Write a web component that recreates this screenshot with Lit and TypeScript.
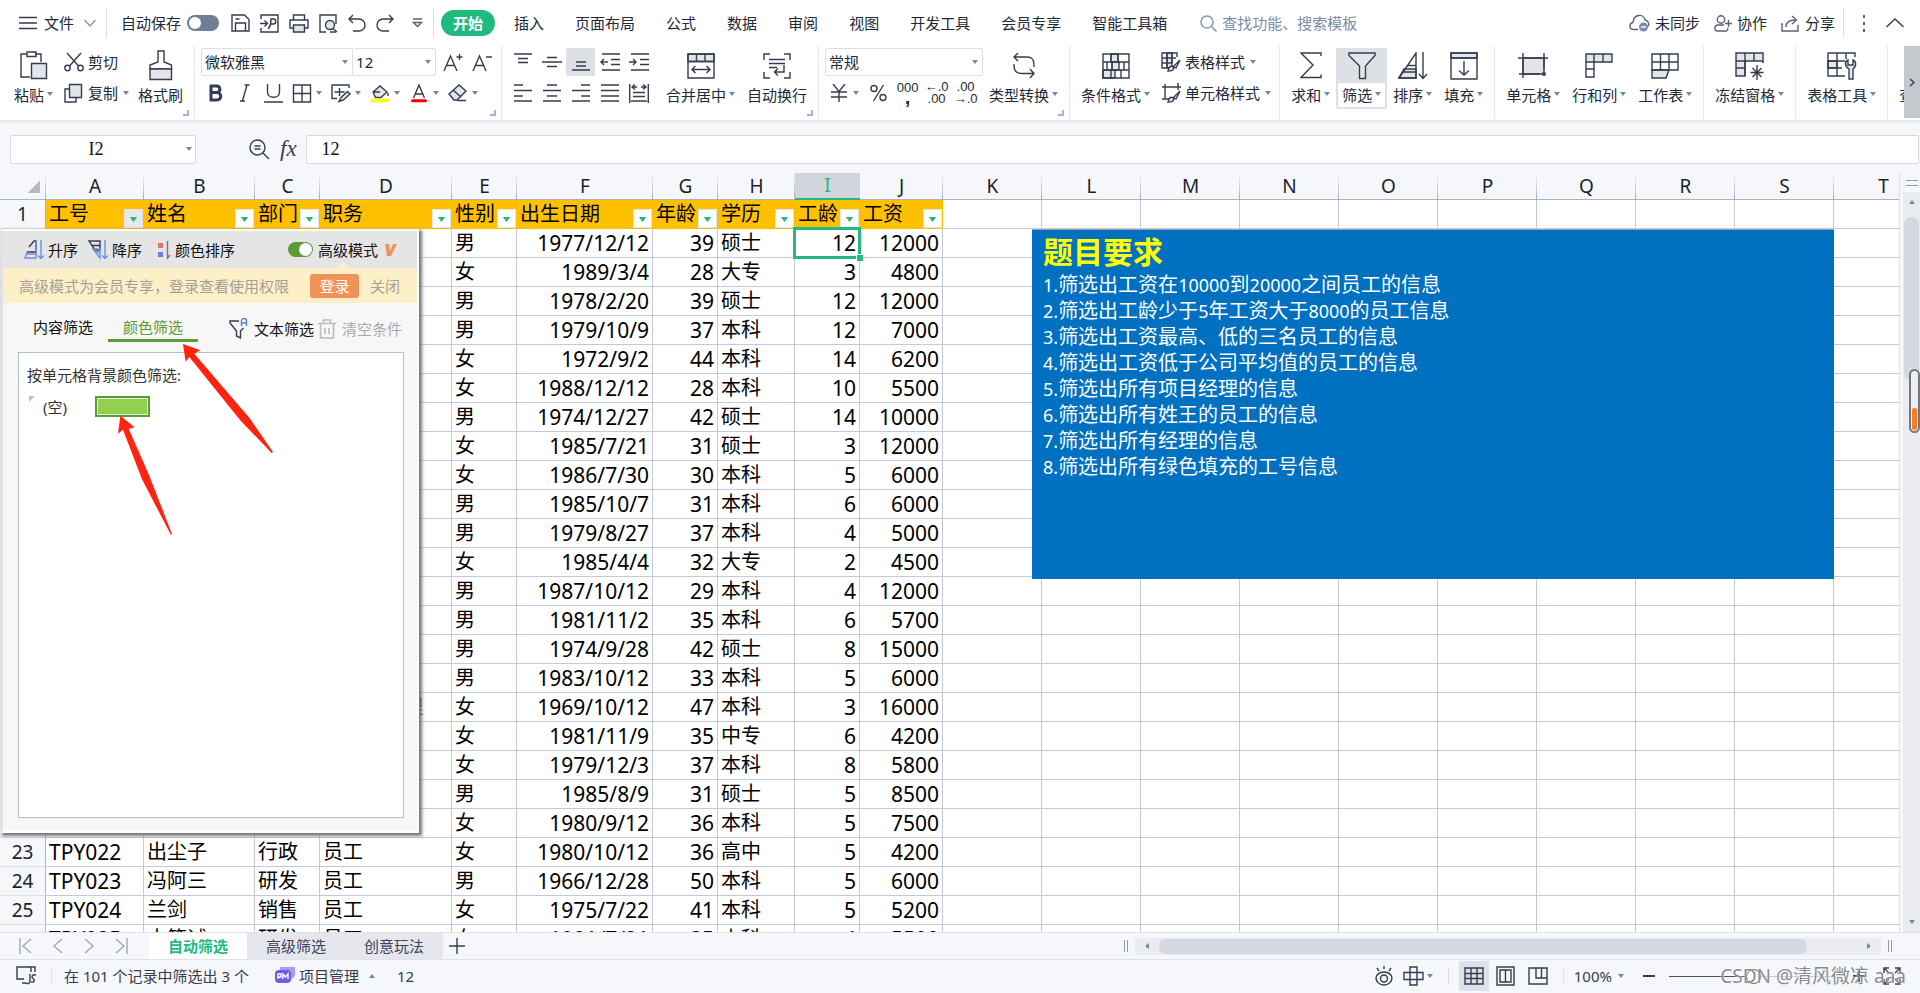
import { LitElement, html, svg, css, nothing, TemplateResult } from "lit";
import { customElement } from "lit/decorators.js";
import { classMap } from "lit/directives/class-map.js";
import { styleMap } from "lit/directives/style-map.js";

const icon = (w: number, h: number, body: unknown) => html`<svg
  class="ico" width=${w} height=${h} viewBox="0 0 ${w} ${h}" aria-hidden="true">${body}</svg>`;

const caret = html`<svg class="caret" width="6" height="4" viewBox="0 0 6 4" aria-hidden="true"><path d="M0 0h6L3 4z"/></svg>`;

const I: Record<string, TemplateResult> = {
  menu: icon(18, 14, svg`<path d="M0 1.500h18M0 7h18M0 12.500h18"/>`),
  chevronDown: icon(12, 8, svg`<path class="soft" d="M.5 1l5.500 6 5.500-6"/>`),
  chevronUp: icon(18, 10, svg`<path d="M.5 9L9 1l8.500 8"/>`),
  save: icon(19, 18, svg`<path d="M1 1h12.500l4.500 4.500v11.500h-17zM4.500 17V9h10v8M4.500 5h4"/>`),
  exportDoc: icon(19, 19, svg`<path d="M1 5V1h17v17H1v-4M0 9.500h7M4.500 6.500l3 3-3 3M8.500 15c2-3 2.500-6 2.500-10h2.500c3 0 3 5 0 5h-2.500"/>`),
  print: icon(20, 19, svg`<path d="M4.500 5.500V1h11v4.500M4.500 14H1V6h18v8h-3.500"/><path class="g" d="M4.500 11h11v7h-11z"/>`),
  preview: icon(19, 19, svg`<path d="M7 18H1V1h16v9M17 18h-6"/><circle class="g" cx="11" cy="11" r="4.500"/><path d="M14 14.500l4 3.500"/>`),
  undo: icon(18, 18, svg`<path d="M5 1L1 5l4 4M1 5h10a6 6 0 010 12H5"/>`),
  redo: icon(18, 18, svg`<path d="M13 1l4 4-4 4M17 5H7a6 6 0 000 12h6"/>`),
  more: icon(11, 10, svg`<path class="mid" d="M1 1h9M1.500 4.500l4 4 4-4z"/>`),
  search: icon(17, 17, svg`<path class="blue" d="M12 12l4.500 4.500"/><circle class="blue" cx="7" cy="7" r="6"/>`),
  cloud: icon(21, 18, svg`<path class="mid" d="M9 15.500H4.500C-.5 15 .2 9 4 8.500 4.500 0 14.500-1 16 6c3.500.5 4.500 4 3 6.500"/><circle cx="14.500" cy="13" r="4.500" style="fill:#7d8bab;stroke:none"/><path d="M12 13h5" style="stroke:#fff"/>`),
  collab: icon(18, 17, svg`<circle class="mid" cx="7" cy="4.500" r="3.700"/><path class="mid" d="M10 10H4c-4 0-4 6-1 6h9c2 0 2-2 1.500-3M14.500 5v7M11 8.500h7"/>`),
  share: icon(19, 17, svg`<path class="mid" d="M2 9H1v7h16v-6M5 12c0-5 4-7 9-7M11 1l4.500 4L11 9"/>`),
  dots: icon(4, 17, svg`<path d="M1 0h2v3H1zM1 7h2v3H1zM1 14h2v3H1z" style="fill:#5b6275;stroke:none"/>`),
  paste: icon(28, 30, svg`<path d="M10 26H1V3h6M15 3h6v8M7 1h9v4.500H7z"/><path class="g" d="M11.500 12.500h15v15h-15z"/>`),
  cut: icon(20, 20, svg`<circle cx="3.500" cy="16" r="2.700"/><circle cx="16.500" cy="16" r="2.700"/><path d="M3 1l11.500 13M17 1L5.500 14"/>`),
  copy: icon(20, 20, svg`<path d="M5 6H1v13h11v-4"/><path class="g" d="M5.500 1.500h12v13h-12z"/>`),
  brush: icon(24, 31, svg`<path d="M1 19v-4l8-3V1h6v11l7.500 3v4z"/><path class="g" d="M1 19h21.500v10.500H1z"/>`),
  fontUp: icon(20, 19, svg`<path d="M1 18L7.500 3 14 18M3.500 12.500h8M13.500 4h6M16.500 1v6"/>`),
  fontDown: icon(20, 19, svg`<path d="M1 18L7.500 3 14 18M3.500 12.500h8M14 4h6"/>`),
  bold: icon(14, 18, svg`<path d="M2 2h5.500c4.500 0 4.500 6.500 0 6.500H2h6c5 0 5 7.500 0 7.500H2z" style="stroke-width:3"/>`),
  italic: icon(12, 18, svg`<path d="M5.500 1h5M1 17h5M8 1L3.500 17"/>`),
  underline: icon(19, 19, svg`<path d="M3.500 0v8c0 7 12 7 12 0V0M0 18h19"/>`),
  borders: icon(19, 19, svg`<path d="M1 1h17v17H1zM9.500 1v17M1 9.500h17"/>`),
  drawBorder: icon(20, 19, svg`<path d="M6 14.500H1V1h17v3M3.500 8h10M8.500 4v8"/><path class="g" d="M8 17.500l2-4 6.500-6 2.500 2.500-6.500 6z"/>`),
  fill: icon(20, 19, svg`<path class="g" d="M3 8l7-6 7 6-6 5.500H5.500zM3 8h7"/><path d="M18 9v3"/><path d="M2.500 16.500h15" style="stroke:#ff0;stroke-width:3.500;stroke-linecap:round"/>`),
  fontColor: icon(18, 19, svg`<path d="M3.500 14L9 1l5.500 13M5.500 10h7"/><path d="M2.500 16.800h13" style="stroke:#f00;stroke-width:3;stroke-linecap:round"/>`),
  eraser: icon(20, 18, svg`<path class="g" d="M1 10L11 1l7 6-9 9H6z"/><path d="M9 16.500h9M5 6l8 7"/>`),
  vTop: icon(20, 18, svg`<path d="M1 1h18M5 5.500h10M5 9.500h10"/>`),
  vMid: icon(20, 18, svg`<path d="M5 4.500h10M0 9h20M5 13.500h10"/>`),
  vBottom: icon(20, 18, svg`<path d="M5 9h10M5 13h10M1 17h18"/>`),
  outdent: icon(20, 18, svg`<path d="M2 1h18M11 6.500h9M11 11.500h9M2 17h18M8 9H1M4 6L1 9l3 3"/>`),
  indent: icon(20, 18, svg`<path d="M2 1h18M11 6.500h9M11 11.500h9M2 17h18M0 9h7M4 6l3 3-3 3"/>`),
  left: icon(20, 18, svg`<path d="M1 1h9M1 6.500h18M1 12h9M1 17h18"/>`),
  center: icon(20, 18, svg`<path d="M5 1h10M1 6.500h18M5 12h10M1 17h18"/>`),
  right: icon(20, 18, svg`<path d="M10 1h9M1 6.500h18M10 12h9M1 17h18"/>`),
  justify: icon(20, 18, svg`<path d="M1 1h18M1 6.500h18M1 12h18M1 17h18"/>`),
  distribute: icon(20, 19, svg`<path d="M.7 0v19M19.300 0v19M3 3h5M12 3h5M6 .5L3 3l3 2.500M14 .5L17 3l-3 2.500M4 8.500h12M4 12.500h12M2 17h16"/>`),
  merge: icon(28, 26, svg`<path class="g" d="M1 1h26v7.500H1z"/><path d="M1 1h26v24H1zM1 8.500h26M9.500 1v7M18 1v7M5 16.500h18M8.500 13L5 16.500 8.500 20M19.500 13l3.500 3.500-3.500 3.500"/>`),
  wrap: icon(28, 26, svg`<path d="M1 7V1h6M21 1h6v6M1 19v6h6M21 25h6v-6M6 6.500h16M6 10.500h16M6 14.500h8M21 12v7h-9M15 15.500L11.500 19l3.500 3.500"/>`),
  yen: icon(18, 18, svg`<path d="M3 0l6 7.500L15 0M9 7.500V18M1 8h16M1 13h16"/>`),
  percent: icon(17, 18, svg`<circle cx="4" cy="4.500" r="3"/><circle cx="13" cy="13.500" r="3"/><path d="M13.500 1L3.500 17"/>`),
  convert: icon(24, 27, svg`<path d="M6 1L2 5l4 4M2 5h13c5 0 7 2 7 8v2M18 17l4 4.500-4 4.500M22 21.500H10c-5 0-8-2-8-8V12"/>`),
  condFormat: icon(28, 26, svg`<path class="g" d="M9 1h7v8H9zM10 9h7v8h-7zM1 17h12v8H1z"/><path d="M1 1h26v24H1zM1 9h26M1 17h26M9 1v8M16 1v8M5 9v8M10 9v8M22 9v8M9 17v8M19 17v8"/>`),
  tableStyle: icon(20, 20, svg`<path class="g" d="M6 1h5v15H6z"/><path d="M6 16H1V1h15v4M1 6h14M1 11h10M6 1v15M11 1v10"/><path d="M19 8l-6.500 6.500M19 8l-4 8-3-2"/><path class="g" d="M7 19c1-5 3-6 6-3-1 3-3 3-6 3z"/>`),
  cellStyle: icon(20, 20, svg`<path d="M4 1v15M17 0v7M1 4h19M1 16h8"/><path d="M19 8l-6.500 6.500M19 8l-4 8-3-2"/><path class="g" d="M7 19c1-5 3-6 6-3-1 3-3 3-6 3z"/>`),
  sum: icon(22, 27, svg`<path d="M21 4V1H1l12 12L1 25.500h20v-3"/>`),
  funnel: icon(28, 28, svg`<path class="g" d="M1 1h26v2.500L17.500 14v12.500h-6V14L1 3.500z"/>`),
  sort: icon(30, 28, svg`<path class="g" d="M6 17h12v9H1z"/><path d="M1 26L18 1v25zM9 13.500h9M5 20h13M25 0v26M21 22l4 4.500 4-4.500"/>`),
  fillDown: icon(28, 28, svg`<path class="g" d="M1 1h26v5H1z"/><path d="M1 1h26v26H1zM1 6h26M14 9v14M9 18.500l5 4.500 5-4.500"/>`),
  cell: icon(30, 26, svg`<path class="g" d="M5 5h21v16H5z"/><path d="M0 5h30M5 0v25M26 0v16M1 21h21"/><path d="M25 20h2v2h-2z"/>`),
  rowCol: icon(28, 26, svg`<path class="g" d="M1 1h26v8H1z"/><path d="M1 9v15h8V1M18 1v8M1 16h8"/>`),
  worksheet: icon(28, 26, svg`<path class="g" d="M1 17h17l-3 8H1z"/><path d="M1 1h26v16H1zM1 9h26M9.500 1v16M18 1v16"/>`),
  freeze: icon(30, 28, svg`<path class="g" d="M1 1h27v8H10v15H1z"/><path d="M10 1v23M19 1v8M28 9v2M1 9h9M1 16h9M22 13v15M15.500 20.500h13M17.500 16l9 9M26.500 16l-9 9"/>`),
  tableTool: icon(30, 28, svg`<path class="g" d="M1 9h9v7H1z"/><path d="M18 24H1V1h27v4M1 9h17M1 16h14M10 1v23M19 1v6"/><path class="g" d="M22 27V17c-5-3-4-8-1-9v5h5V8c3 1 4 6 0 9v10z"/>`),
  zoomOut: icon(21, 21, svg`<circle cx="8.500" cy="8.500" r="7.500"/><path d="M14 14l6 6M5.500 7h6M5.500 10h6"/>`),
  sortAsc: icon(20, 20, svg`<path d="M5 7l5-6h2v11H3"/><path class="vio" d="M3 12l-2 6h11V1M3 14h9M17 0v18M14 15.500l3 3 3-3"/>`),
  sortDesc: icon(20, 20, svg`<path d="M1 1h11v9H7zM4 5.500h8"/><path class="vio" d="M5 9h7v9zM7 12h5M17 0v18M14 15.500l3 3 3-3"/>`),
  sortColor: icon(14, 20, svg`<path d="M1 3h5v5H1z" style="fill:#e8706e;stroke:none"/><path d="M1 12h5v5H1z" style="fill:#6b7ff0;stroke:none"/><path d="M10.500 1v17l2.500-3" style="stroke:#777"/>`),
  textFilter: icon(20, 21, svg`<path d="M10 3H1v2l6.500 8v5l4 2V13l3-3"/><path d="M12.500 8V3q0-2.500 2.500-2.500T17.500 3v5M12.500 5h5" style="stroke:#4d84dc"/>`),
  trash: icon(20, 20, svg`<path class="dim" d="M1 4.500h18M6.500 4V1h7v3M3.500 5v14h13V5M8 9v6M12 9v6"/>`),
  first: icon(13, 16, svg`<path class="nav" d="M1 0v16M12 1L4 8l8 7"/>`),
  prev: icon(13, 16, svg`<path class="nav" d="M11 1L3 8l8 7"/>`),
  next: icon(13, 16, svg`<path class="nav" d="M2 1l8 7-8 7"/>`),
  last: icon(13, 16, svg`<path class="nav" d="M12 0v16M1 1l8 7-8 7"/>`),
  plus: icon(16, 16, svg`<path d="M8 0v16M0 8h16"/>`),
  js: icon(21, 20, svg`<path d="M8 13H1V1h14v5M6 17h4M15 1h4v5M14 8v7c0 3-3 3-4 2M20 9c-4-1-5 2-3 3.500s2 4-2 3.500"/>`),
  pm: icon(20, 18, svg`<path d="M5 0h15v9l-5 5H5z" style="fill:#a79bf5;stroke:none"/><rect x="0" y="3" width="16" height="13" rx="4" style="fill:#6c5ce7;stroke:none"/><path d="M3 12V7h3v3H3M8 12V7l2.500 3L13 7v5" style="stroke:#fff"/>`),
  eye: icon(20, 20, svg`<path d="M10 6c5 0 8 3 8 6s-3 7-8 7-8-4-8-7 3-6 8-6zM10 0v3M3 2l2 3M17 2l-2 3"/><circle cx="10" cy="12.500" r="3.500"/>`),
  cross: icon(21, 20, svg`<path d="M7 1h7v18H7zM1 6.500h19v7H1z"/>`),
  viewGrid: icon(20, 18, svg`<path d="M1 1h18v16H1zM1 6.500h18M1 11.500h18M7 1v16M13 1v16"/>`),
  viewPage: icon(19, 20, svg`<path d="M1 1h17v18H1zM4 4h11v12H4zM9.500 4v12"/>`),
  viewBreak: icon(20, 18, svg`<path d="M1 1h18v16H1zM8 1v10h11M13.500 1v10"/>`),
  full: icon(18, 18, svg`<path d="M1 6V1h5M12 1h5v5M1 12v5h5M12 17h5v-5M2 2l4 4M16 2l-4 4M2 16l4-4M16 16l-4-4"/>`),
};

const COLS: [string, number][] = [
  ["A", 98], ["B", 111], ["C", 65], ["D", 132], ["E", 65], ["F", 136], ["G", 65], ["H", 77], ["I", 65], ["J", 83],
  ..."KLMNOPQRST".split("").map((c) => [c, 99] as [string, number]),
];
const HEAD = ["工号", "姓名", "部门", "职务", "性别", "出生日期", "年龄", "学历", "工龄", "工资"];
const ROWS: string[][] = `,,,,男,1977/12/12,39,硕士,12,12000
,,,,女,1989/3/4,28,大专,3,4800
,,,,男,1978/2/20,39,硕士,12,12000
,,,,男,1979/10/9,37,本科,12,7000
,,,,女,1972/9/2,44,本科,14,6200
,,,,女,1988/12/12,28,本科,10,5500
,,,,男,1974/12/27,42,硕士,14,10000
,,,,女,1985/7/21,31,硕士,3,12000
,,,,女,1986/7/30,30,本科,5,6000
,,,,男,1985/10/7,31,本科,6,6000
,,,,男,1979/8/27,37,本科,4,5000
,,,,女,1985/4/4,32,大专,2,4500
,,,,男,1987/10/12,29,本科,4,12000
,,,,男,1981/11/2,35,本科,6,5700
,,,,男,1974/9/28,42,硕士,8,15000
,,,,男,1983/10/12,33,本科,5,6000
,,,项目部经理,女,1969/10/12,47,本科,3,16000
,,,,女,1981/11/9,35,中专,6,4200
,,,,女,1979/12/3,37,本科,8,5800
,,,,男,1985/8/9,31,硕士,5,8500
,,,,女,1980/9/12,36,本科,5,7500
TPY022,出尘子,行政,员工,女,1980/10/12,36,高中,5,4200
TPY023,冯阿三,研发,员工,男,1966/12/28,50,本科,5,6000
TPY024,兰剑,销售,员工,女,1975/7/22,41,本科,5,5200
TPY025,古笃诚,研发,员工,女,1981/7/21,35,本科,4,5500`.split("\n").map((r) => r.split(","));

const NOTES = [
  "1.筛选出工资在10000到20000之间员工的信息",
  "2.筛选出工龄少于5年工资大于8000的员工信息",
  "3.筛选出工资最高、低的三名员工的信息",
  "4.筛选出工资低于公司平均值的员工的信息",
  "5.筛选出所有项目经理的信息",
  "6.筛选出所有姓王的员工的信息",
  "7.筛选出所有经理的信息",
  "8.筛选出所有绿色填充的工号信息",
];

const shared = css`
  * { box-sizing: border-box; }
  button, input, select { font: inherit; color: inherit; border: 0; background: none; padding: 0; margin: 0; border-radius: 0; outline: 0; }
  button { white-space: nowrap; display: flex; align-items: center; }
  .ico { display: block; flex: none; fill: none; stroke: #363c50; stroke-width: 1.4; }
  .ico .g { fill: #e3e5e9; }
  .ico .soft { stroke: #8d93a3; }
  .ico .mid { stroke: #5b6275; }
  .ico .blue { stroke: #8c98b4; stroke-width: 1.6; }
  .ico .vio { stroke: #6f8fe0; }
  .ico .dim { stroke: #bcbcbc; stroke-width: 1.6; }
  .ico .nav { stroke: #a3a8b5; }
  .caret { flex: none; fill: #7885a0; }
`;

@customElement("filter-panel")
export class FilterPanel extends LitElement {
  static styles = [shared, css`
    :host {
      display: flex; flex-direction: column; background: #f7f7f7; color: #111;
      border: 2px solid #fff; border-left-color: #dfe1e4; box-shadow: 2px 2px 3px 1px #777; line-height: 20px;
    }
    .head { flex: none; display: flex; align-items: center; height: 37px; background: #e5e5e5; padding: 0 20px 0 21px; }
    .head button { gap: 4px; margin-right: 10px; }
    .head .wide { margin-right: auto; margin-left: 5px; }
    .mode { display: flex; align-items: center; gap: 5px; margin-right: 7px; }
    .mode input { appearance: none; width: 25px; height: 15px; border-radius: 8px; background: #5d9a38; display: flex; justify-content: flex-end; padding: 1px; }
    .mode input::before { content: ""; width: 13px; height: 13px; border-radius: 50%; background: #fff; }
    .vip { fill: #f0935a; display: block; }
    .tip { flex: none; display: flex; align-items: center; justify-content: space-between; height: 35px; background: #fdf0c8; color: #a5a093; padding: 0 17px 0 16px; position: relative; white-space: nowrap; }
    .tip::before { content: ""; position: absolute; top: -6px; right: 69px; border: 5px solid transparent; border-top: 0; border-bottom: 6px solid #fdf0c8; }
    .tip .login { height: 24px; width: 49px; justify-content: center; border-radius: 3px; background: #f0935a; color: #fff; margin: 0 11px 0 auto; }
    .tabs { flex: none; display: flex; align-items: center; height: 49px; padding: 2px 15px 0 15px; }
    .tabs .tab { width: 90px; height: 26px; justify-content: center; border-bottom: 3px solid transparent; }
    .tabs .on { color: #5d9a38; border-color: #5d9a38; }
    .tabs .tool { gap: 5px; }
    .tabs .first { margin-left: auto; margin-right: 3px; }
    .tabs .off { color: #aaa; }
    .box { flex: 1; margin: 0 13px 13px 15px; border: 1px solid #b4bfcc; background: #fff; padding: 12px 8px; color: #333; }
    .opts { display: flex; align-items: center; margin-top: 11px; }
    .opts .mark { width: 0; height: 0; align-self: flex-start; border: 3px solid #c4c4c4; border-right-color: transparent; border-bottom-color: transparent; margin: 0 8px 0 2px; }
    .swatch { width: 55px; height: 21px; border: 2px solid #5d9a38; background: #92d050; box-shadow: inset 0 0 0 1px #e4f3d4; margin-left: 28px; }
  `];
  render() {
    return html`
      <div class="head">
        <button>${I.sortAsc}升序</button><button>${I.sortDesc}降序</button><button class="wide">${I.sortColor}颜色排序</button>
        <label class="mode"><input type="checkbox" checked />高级模式</label>
        <svg class="vip" width="12" height="12" viewBox="0 0 12 12"><path d="M0 0h4l1 7 3-7h4L6 12H2z"/></svg>
      </div>
      <div class="tip"><span>高级模式为会员专享，登录查看使用权限</span><button class="login">登录</button><button>关闭</button></div>
      <div class="tabs">
        <button class="tab">内容筛选</button><button class="tab on">颜色筛选</button>
        <button class="tool first">${I.textFilter}文本筛选</button><button class="tool off">${I.trash}清空条件</button>
      </div>
      <div class="box">
        <div>按单元格背景颜色筛选:</div>
        <div class="opts"><span class="mark"></span><span>(空)</span><button class="swatch" aria-label="绿色"></button></div>
      </div>`;
  }
}

@customElement("app-root")
export class AppRoot extends LitElement {
  static styles = [shared, css`
    :host {
      display: flex; flex-direction: column; height: 100vh; overflow: hidden; background: #f5f7fa; color: #22283a;
      font: 15px/20px "Noto Sans", "Noto Sans CJK SC", sans-serif;
    }
    .menu { flex: none; display: flex; align-items: center; height: 46px; background: #fff; padding: 0 16px 0 19px; }
    .vsep { flex: none; width: 1px; height: 30px; background: #dcdfe4; }
    .file { gap: 7px; margin-right: 10px; }
    .file .ico:last-child { margin-left: 3px; }
    .auto { display: flex; align-items: center; gap: 6px; margin: 0 12px 0 14px; white-space: nowrap; }
    .auto input { appearance: none; width: 32px; height: 16px; border-radius: 8px; background: #717c96; padding: 2px; display: flex; }
    .auto input::before { content: ""; width: 12px; height: 12px; border-radius: 50%; background: #fff; }
    .quick { display: flex; align-items: center; gap: 10px; margin-right: 10px; }
    .quick button:last-child { margin-left: 8px; }
    .tabs { display: flex; gap: 7px; margin-left: 7px; }
    .tabs button { height: 26px; padding: 0 12px; border-radius: 13px; }
    .tabs .on { background: #20ba7e; color: #fff; font-weight: 700; }
    .search { display: flex; align-items: center; gap: 5px; margin-left: 21px; margin-right: auto; }
    .search input { width: 160px; }
    .search input::placeholder { color: #7e8aa6; opacity: 1; }
    .acct { gap: 5px; margin-right: 14px; }
    .acct.end { margin-right: 8px; }
    .dots { margin: 0 20px 0 18px; }

    .ribbon { flex: none; display: flex; height: 75px; background: #fff; border-bottom: 1px solid #e4e6ea; box-shadow: 0 1px 2px #dfe1e5; overflow: hidden; position: relative; }
    .group { flex: none; display: flex; padding: 2px 5px 10px; border-right: 1px solid #e6e8ec; position: relative; height: 73px; }
    .group.first { padding-left: 8px; }
    .group.wide { padding-left: 6px; }
    .launch { position: absolute; right: 5px; bottom: 3px; width: 6px; height: 6px; border: solid #a9b4c8; border-width: 0 2px 2px 0; }
    .big { flex: none; flex-direction: column; padding: 0 6px; height: 61px; border-radius: 2px; }
    .big .pic { height: 35px; display: grid; place-items: center; }
    .big .cap { height: 24px; display: flex; align-items: center; gap: 3px; }
    .big .cap .caret { margin-top: -3px; }
    .big.on { background: #dde1e6; padding: 0 2px; }
    .big.on .cap { background: #fff; padding: 0 4px; }
    .stack { display: flex; flex-direction: column; gap: 3px; }
    .stack.pad { padding: 0 3px 0 5px; }
    .line { display: flex; align-items: center; height: 28px; }
    .small { gap: 4px; height: 28px; }
    .small .caret { margin-left: 1px; }
    .sq { width: 29px; height: 28px; justify-content: center; border-radius: 2px; }
    .sq.on { background: #dde1e6; }
    .drop { width: 39px; height: 28px; padding-left: 4px; gap: 4px; }
    .drop .ico { width: 20px; }
    .combo { display: grid; align-items: center; height: 28px; border: 1px solid #dcdfe4; border-radius: 2px; }
    .combo > * { grid-area: 1 / 1; }
    .combo select { appearance: none; padding-left: 3px; width: 100%; height: 26px; }
    .combo .caret { justify-self: end; margin-right: 4px; pointer-events: none; }
    .combo.font { width: 152px; }
    .combo.size { width: 84px; margin-left: -1px; margin-right: 2px; }
    .combo.num { width: 158px; }
    .align { margin-right: 7px; }
    .dec { flex-direction: column; width: 29px; font: 13px/12px "Liberation Sans", sans-serif; justify-content: center; }
    .dec .comma { font-size: 20px; font-weight: 700; line-height: 6px; padding-bottom: 4px; }
    .scroller { position: absolute; right: 0; top: 0; width: 16px; height: 72px; background: #c6c8cf; justify-content: center; }

    .formula { flex: none; display: flex; align-items: center; height: 52px; padding: 4px 1px 0 10px; }
    .name { display: grid; align-items: center; width: 186px; height: 29px; border: 1px solid #d4d8df; border-radius: 2px; background: #fff; }
    .name > * { grid-area: 1 / 1; }
    .name input { text-align: center; width: 170px; font: 18px/24px "Liberation Serif", serif; color: #111; }
    .name .caret { justify-self: end; margin-right: 3px; }
    .fx { margin: 0 9px 0 53px; gap: 10px; font: italic 23px/24px "Liberation Serif", serif; color: #363c50; }
    .value { flex: 1; height: 29px; border: 1px solid #d4d8df; border-radius: 2px; background: #fff; padding-left: 15px; font: 18px/24px "Liberation Serif", serif; color: #111; }

    .work { flex: 1; min-height: 0; display: flex; }
    .sheet { flex: 1; min-width: 0; position: relative; overflow: hidden; background: #fff; border-right: 1px solid #dcdfe6; }
    table { table-layout: fixed; border-collapse: separate; border-spacing: 0; width: 0; color: #000; }
    th, td { height: 29px; padding: 0 3px; border: solid #c3c8dc; border-width: 0 1px 1px 0; line-height: 28px; white-space: nowrap; font-weight: 400; font-size: 20px; text-align: left; }
    thead th { height: 27px; line-height: 26px; text-align: center; font-size: 19px; color: #1b1f2c; padding: 0; background: linear-gradient(#f5f7fa, #a3adc4) right / 1px 100% no-repeat #f5f7fa; border-right: 0; border-bottom-color: #a9b2c6; }
    thead th.cur { background: #d2d5de; color: #20ba7e; border-bottom: 2px solid #20ba7e; line-height: 25px; }
    tbody th { text-align: center; font-size: 19px; background: #f5f7fa; color: #1b1f2c; padding: 0; border-color: #a9b2c6; border-bottom-color: #dfe2ea; }
    .corner div { width: 13px; height: 13px; margin-left: 27px; background: linear-gradient(135deg, transparent 50%, #b9b9b9 50%); }
    .n { text-align: right; font-size: 21px; }
    .code { font-size: 21px; }
    .h { background: #ffc000; border-color: #ffc000; padding-right: 0; }
    .h div { display: flex; justify-content: space-between; align-items: flex-end; height: 28px; }
    .h button { flex: none; width: 19px; height: 19px; background: #fff; border: 1px solid #dfe3ec; justify-content: center; padding-top: 2px; }
    .h .caret { fill: #20ba7e; width: 9px; height: 5px; }
    .h button.on { background: #e6e8ee; }
    .sel { position: relative; }
    .sel::before { content: ""; position: absolute; inset: -2px; border: 3px solid #20ba7e; }
    .sel::after { content: ""; position: absolute; right: -4px; bottom: -4px; width: 6px; height: 6px; background: #20ba7e; border: solid #fff; border-width: 1px 0 0 1px; }
    .note { position: absolute; left: 1032px; top: 56px; width: 802px; height: 350px; background: #0070c0; border-top: 1px solid #a3a3a3; color: #fff; padding: 2px 11px; font-size: 20px; line-height: 26px; }
    .note h2 { margin: 0; font-size: 30px; line-height: 40px; color: #ff0; }
    .note ol { list-style: none; margin: 0; padding: 0; }
    .note .d { font-size: 18px; }
    filter-panel { position: absolute; left: 1px; top: 56px; width: 418px; height: 604px; }
    .arrows { position: absolute; left: 0; top: 57px; pointer-events: none; }
    .vbar { flex: none; width: 20px; display: flex; flex-direction: column; align-items: flex-end; padding-left: 3px; }
    .grip { width: 12px; height: 6px; border: solid #8f9bb3; border-width: 1px 0; margin: 7px 2px 6px; flex: none; }
    .vtrack { flex: 1; width: 17px; background: #ebecf1; display: flex; flex-direction: column; justify-content: space-between; align-items: center; padding: 8px 0; position: relative; }
    .vtrack .caret:first-child { transform: rotate(180deg); }
    .vthumb { position: absolute; top: 25px; left: 1px; right: 1px; height: 163px; border-radius: 7px; background: #d5d8e0; }
    .widget { position: absolute; top: 177px; right: 0; width: 11px; height: 64px; border: 2px solid #77787c; border-radius: 6px; background: #eeeff2; padding: 37px 1px 1px; }
    .widget div { height: 100%; background: #ff7a22; border-radius: 2px; }

    .sheets { flex: none; display: flex; height: 27px; border-top: 1px solid #e1e3e9; }
    .nav { display: flex; gap: 19px; padding: 0 21px 0 19px; }
    .sheets .tab { width: 98px; justify-content: center; background: #e5e7ed; color: #3d4358; }
    .sheets .tab.on { background: #fff; color: #20ba7e; font-weight: 700; }
    .add { margin: 0 auto 0 6px; }
    .hbar { display: flex; align-items: center; gap: 7px; margin-right: 28px; width: 40%; }
    .split { width: 4px; height: 12px; border: solid #8f9bb3; border-width: 0 1px; }
    .htrack { flex: 1; height: 17px; background: #ebecf1; display: flex; align-items: center; padding: 0 9px; }
    .htrack .caret:first-child { transform: rotate(90deg); }
    .htrack .caret:last-child { transform: rotate(-90deg); }
    .hthumb { width: 89%; height: 15px; border-radius: 7px; background: #d5d8e0; margin: 0 auto 0 9px; }

    .status { flex: none; display: flex; align-items: center; height: 34px; border-top: 1px solid #dfe2e8; padding: 0 19px 1px 16px; color: #363c50; position: relative; white-space: nowrap; }
    .status .vsep { height: 18px; }
    .js { margin-right: 14px; }
    .msg { margin: 0 26px 0 12px; }
    .pm { gap: 4px; margin-right: 22px; }
    .pm .caret { transform: rotate(180deg); margin-left: 6px; }
    .views { display: flex; align-items: center; margin-left: auto; }
    .views button { height: 30px; justify-content: center; }
    .views .v { width: 30px; border-radius: 2px; margin-right: 2px; }
    .views .v.on { background: #dde1e8; }
    .eye { margin-right: 9px; }
    .crossb { gap: 3px; margin-right: 15px; }
    .views .vsep { margin-right: 10px; }
    .views .v + .vsep { margin-left: 8px; }
    .pct { gap: 6px; margin-right: 18px; }
    .minus { width: 13px; }
    .bar { display: block; width: 12px; height: 2px; background: #363c50; }
    .zoom { appearance: none; width: 168px; height: 16px; margin: 0 16px 0 14px; background: linear-gradient(90deg, #4b5165 50%, #c6cad3 50%) center / 100% 1px no-repeat; }
    .zoom::-webkit-slider-thumb { appearance: none; width: 15px; height: 15px; border: 1px solid #4b5165; border-radius: 50%; background: #fff; }
    .fullb { margin-left: 18px; }
    .mark { position: absolute; right: 14px; top: 4px; font-size: 19px; line-height: 24px; color: #8b8d92; text-shadow: 0 0 2px #fff; pointer-events: none; }
  `];

  private big(pic: TemplateResult, cap: string, drop = true, on = false) {
    return html`<button class=${classMap({ big: true, on })}><span class="pic">${pic}</span><span class="cap">${cap}${drop ? caret : nothing}</span></button>`;
  }
  private small(pic: TemplateResult, cap: string, drop = true) {
    return html`<button class="small">${pic}${cap}${drop ? caret : nothing}</button>`;
  }
  private sq(pic: TemplateResult, label: string, on = false) {
    return html`<button class=${classMap({ sq: true, on })} aria-label=${label}>${pic}</button>`;
  }
  private drop(pic: TemplateResult, label: string) {
    return html`<button class="drop" aria-label=${label}>${pic}${caret}</button>`;
  }

  private menu() {
    const quick: [string, TemplateResult][] = [["保存", I.save], ["输出为PDF", I.exportDoc], ["打印", I.print], ["打印预览", I.preview], ["撤销", I.undo], ["恢复", I.redo], ["更多", I.more]];
    return html`<header class="menu">
      <button class="file">${I.menu}文件${I.chevronDown}</button><span class="vsep"></span>
      <label class="auto">自动保存<input type="checkbox" /></label>
      <div class="quick">${quick.map(([n, p]) => html`<button aria-label=${n}>${p}</button>`)}</div>
      <span class="vsep"></span>
      <nav class="tabs">${["开始", "插入", "页面布局", "公式", "数据", "审阅", "视图", "开发工具", "会员专享", "智能工具箱"].map((t, i) => html`<button class=${classMap({ on: i === 0 })}>${t}</button>`)}</nav>
      <label class="search">${I.search}<input placeholder="查找功能、搜索模板" aria-label="查找" /></label>
      <button class="acct">${I.cloud}未同步</button><button class="acct">${I.collab}协作</button><button class="acct end">${I.share}分享</button>
      <span class="vsep"></span><button class="dots" aria-label="更多">${I.dots}</button><button aria-label="收起">${I.chevronUp}</button>
    </header>`;
  }

  private ribbon() {
    return html`<div class="ribbon">
      <div class="group first">${this.big(I.paste, "粘贴")}
        <div class="stack pad">${this.small(I.cut, "剪切", false)}${this.small(I.copy, "复制")}</div>
        ${this.big(I.brush, "格式刷", false)}<span class="launch"></span></div>
      <div class="group wide"><div class="stack">
        <div class="line">
          <span class="combo font"><select aria-label="字体"><option>微软雅黑</option></select>${caret}</span>
          <span class="combo size"><select aria-label="字号"><option>12</option></select>${caret}</span>
          ${this.sq(I.fontUp, "增大字号")}${this.sq(I.fontDown, "减小字号")}
        </div>
        <div class="line">${this.sq(I.bold, "加粗")}${this.sq(I.italic, "倾斜")}${this.sq(I.underline, "下划线")}
          ${this.drop(I.borders, "边框")}${this.drop(I.drawBorder, "绘制边框")}${this.drop(I.fill, "填充颜色")}${this.drop(I.fontColor, "字体颜色")}${this.drop(I.eraser, "清除")}</div>
      </div><span class="launch"></span></div>
      <div class="group wide"><div class="stack align">
        <div class="line">${this.sq(I.vTop, "顶端对齐")}${this.sq(I.vMid, "垂直居中")}${this.sq(I.vBottom, "底端对齐", true)}${this.sq(I.outdent, "减少缩进")}${this.sq(I.indent, "增加缩进")}</div>
        <div class="line">${this.sq(I.left, "左对齐")}${this.sq(I.center, "居中")}${this.sq(I.right, "右对齐")}${this.sq(I.justify, "两端对齐")}${this.sq(I.distribute, "分散对齐")}</div>
      </div>${this.big(I.merge, "合并居中")}${this.big(I.wrap, "自动换行", false)}<span class="launch"></span></div>
      <div class="group wide"><div class="stack">
        <span class="combo num"><select aria-label="数字格式"><option>常规</option></select>${caret}</span>
        <div class="line">${this.drop(I.yen, "货币")}${this.sq(I.percent, "百分比")}
          <button class="dec">000<span class="comma">,</span></button><button class="dec">←.0<span>.00</span></button><button class="dec">.00<span>→.0</span></button></div>
      </div>${this.big(I.convert, "类型转换")}<span class="launch"></span></div>
      <div class="group">${this.big(I.condFormat, "条件格式")}<div class="stack pad">${this.small(I.tableStyle, "表格样式")}${this.small(I.cellStyle, "单元格样式")}</div></div>
      <div class="group">${this.big(I.sum, "求和")}${this.big(I.funnel, "筛选", true, true)}${this.big(I.sort, "排序")}${this.big(I.fillDown, "填充")}</div>
      <div class="group">${this.big(I.cell, "单元格")}${this.big(I.rowCol, "行和列")}${this.big(I.worksheet, "工作表")}</div>
      <div class="group">${this.big(I.freeze, "冻结窗格")}</div>
      <div class="group">${this.big(I.tableTool, "表格工具")}</div>
      <div class="group">${this.big(html``, "查找")}</div>
      <button class="scroller" aria-label="向右滚动">${icon(6, 9, svg`<path d="M1 1l4 3.500L1 8"/>`)}</button>
    </div>`;
  }

  private grid() {
    return html`<table>
      <colgroup><col style=${styleMap({ width: "46px" })} />${COLS.map(([, w]) => html`<col style=${styleMap({ width: `${w}px` })} />`)}</colgroup>
      <thead><tr><th class="corner"><div></div></th>${COLS.map(([c]) => html`<th class=${classMap({ cur: c === "I" })}>${c}</th>`)}</tr></thead>
      <tbody>
        <tr><th>1</th>${COLS.map((_, i) => i < 10
          ? html`<td class="h"><div>${HEAD[i]}<button class=${classMap({ on: i === 0 })} aria-label="筛选${HEAD[i]}">${caret}</button></div></td>`
          : html`<td></td>`)}</tr>
        ${ROWS.map((r, n) => html`<tr><th>${n + 2}</th>${COLS.map((_, i) => html`<td class=${classMap({ n: [5, 6, 8, 9].includes(i), code: i === 0, sel: n === 0 && i === 8 })}>${r[i] ?? ""}</td>`)}</tr>`)}
      </tbody></table>`;
  }

  render() {
    return html`${this.menu()}${this.ribbon()}
      <div class="formula">
        <span class="name"><input aria-label="名称框" value="I2" />${caret}</span>
        <button class="fx" aria-label="插入函数">${I.zoomOut}<span>fx</span></button>
        <input class="value" aria-label="编辑栏" value="12" />
      </div>
      <main class="work">
        <div class="sheet">${this.grid()}
          <section class="note"><h2>题目要求</h2><ol>${NOTES.map((t) => html`<li>${t.split(/(\d+\.?)/).map((p) => /^\d/.test(p) ? html`<span class="d">${p}</span>` : p)}</li>`)}</ol></section>
          <filter-panel></filter-panel>
          <svg class="arrows" width="300" height="320" viewBox="0 0 900 960" fill="#ff2312">
            <path d="M549 342L601 361 583 371 748 563 819 666 815 669 722 572 568 381 557 395z"/>
            <path d="M361 557L404 592 386 596 447 735 516 912 513 915 426 748 369 599 354 611z"/>
          </svg>
        </div>
        <div class="vbar"><div class="grip"></div><div class="vtrack">${caret}${caret}<div class="vthumb"></div><div class="widget"><div></div></div></div></div>
      </main>
      <div class="sheets">
        <div class="nav"><button aria-label="首个">${I.first}</button><button aria-label="上一个">${I.prev}</button><button aria-label="下一个">${I.next}</button><button aria-label="末个">${I.last}</button></div>
        <button class="tab on">自动筛选</button><button class="tab">高级筛选</button><button class="tab">创意玩法</button>
        <button class="add" aria-label="新建工作表">${I.plus}</button>
        <div class="hbar"><span class="split"></span><div class="htrack">${caret}<div class="hthumb"></div>${caret}</div><span class="split"></span></div>
      </div>
      <footer class="status">
        <button class="js" aria-label="宏">${I.js}</button><span class="vsep"></span>
        <span class="msg">在 101 个记录中筛选出 3 个</span>
        <button class="pm">${I.pm}项目管理${caret}</button><span>12</span>
        <div class="views">
          <button class="eye" aria-label="护眼模式">${I.eye}</button><button class="crossb" aria-label="阅读模式">${I.cross}${caret}</button><span class="vsep"></span>
          <button class="v on" aria-label="普通视图">${I.viewGrid}</button><button class="v" aria-label="页面布局">${I.viewPage}</button><button class="v" aria-label="分页预览">${I.viewBreak}</button>
          <span class="vsep"></span><button class="pct">100%${caret}</button>
          <button class="minus" aria-label="缩小"><span class="bar"></span></button>
          <input class="zoom" type="range" min="0" max="200" value="100" aria-label="缩放" />
          <button aria-label="放大">${icon(12, 12, svg`<path d="M6 0v12M0 6h12" style="stroke-width:2"/>`)}</button>
          <button class="fullb" aria-label="全屏">${I.full}</button>
        </div>
        <span class="mark">CSDN @清风微凉 aaa</span>
      </footer>`;
  }
}
